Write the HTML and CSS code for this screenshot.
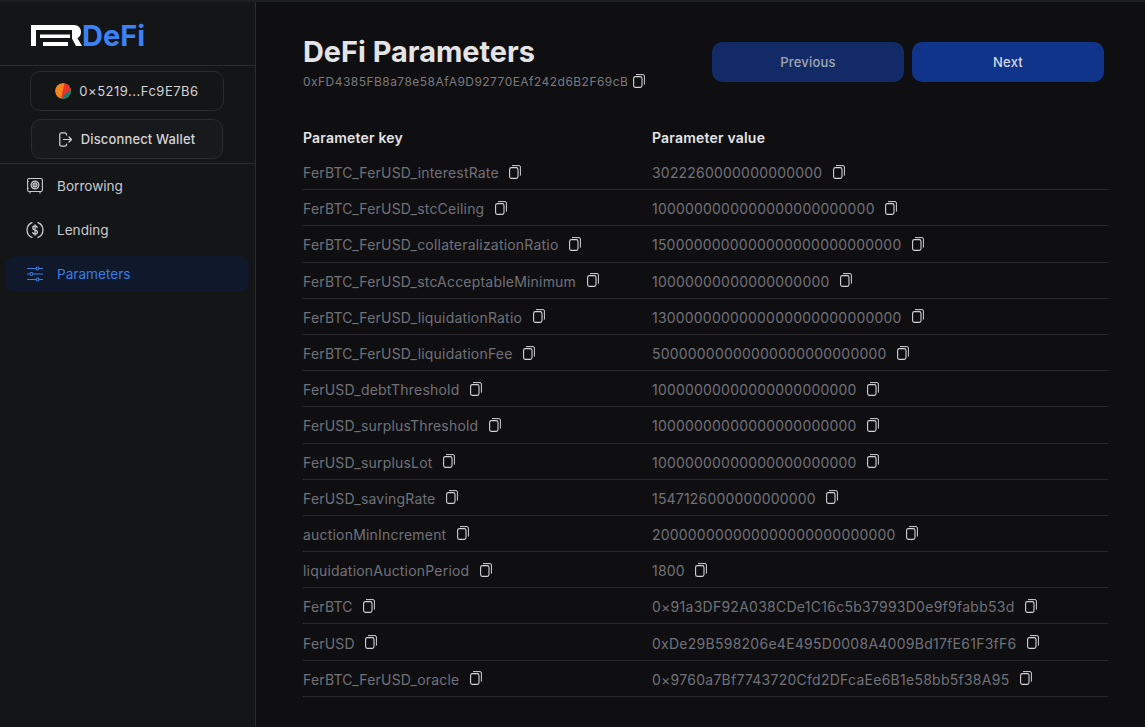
FILE: index.html
```html
<!DOCTYPE html>
<html lang="en">
<head>
<meta charset="utf-8">
<title>DeFi Parameters</title>
<link rel="stylesheet" href="styles.css">
</head>
<body>
<svg class="defs" width="0" height="0" aria-hidden="true">
  <symbol id="copy" viewBox="0 0 12 14">
    <rect x="0.6" y="2.6" width="8.4" height="10.8" rx="1.8" fill="none" stroke="currentColor" stroke-width="1.1"/>
    <path d="M3 .6h7a1.4 1.4 0 0 1 1.4 1.4v8.6" fill="none" stroke="currentColor" stroke-width="1"/>
  </symbol>
</svg>
<div class="app">
  <aside class="sidebar">
    <div class="brand">
      <svg class="fer" width="51" height="21" viewBox="0 0 51 21" aria-hidden="true">
        <path fill="#fff" d="M0 0H43c4.500 0 7 3 7 7 0 2.800-1.300 5-3.500 6.200L51 21h-6l-4-7.500V5H5v16H0z"/>
        <path fill="#fff" d="M9 9.500h30v3.500H9zM12 17h25v4H12z"/>
      </svg>
      <span class="brand-text">DeFi</span>
    </div>
    <div class="wallet">
      <button class="pill pill-account" type="button">
        <svg class="avatar" width="16" height="16" viewBox="0 0 16 16" aria-hidden="true">
          <circle cx="8" cy="8" r="8" fill="#f5841f"/>
          <path d="M9.500 .2A8 8 0 0 1 16 8L6 15.800z" fill="#e3352b"/>
          <path d="M16 7a8 8 0 0 1-9 8.900L9 12z" fill="#0f7f78"/>
        </svg>
        <span>0×5219...Fc9E7B6</span>
      </button>
      <button class="pill pill-disconnect" type="button">
        <svg width="13" height="15" viewBox="0 0 13 15" fill="none" stroke="currentColor" stroke-width="1.200" stroke-linecap="round" stroke-linejoin="round" aria-hidden="true">
          <path d="M7.500 3V2.500A1.600 1.600 0 0 0 5.900.8H2.400A1.600 1.600 0 0 0 .8 2.500v10a1.600 1.600 0 0 0 1.600 1.700h3.500a1.600 1.600 0 0 0 1.600-1.700V12"/>
          <path d="M4.500 7.500h8M10 5l2.500 2.500L10 10"/>
        </svg>
        <span>Disconnect Wallet</span>
      </button>
    </div>
    <nav class="nav">
      <a class="nav-item">
        <svg width="18" height="18" viewBox="0 0 18 18" fill="none" stroke="currentColor" stroke-width="1.100" aria-hidden="true">
          <rect x="1.600" y="1.500" width="14.800" height="13" rx="1.500"/>
          <circle cx="9" cy="8" r="3.900"/><circle cx="9" cy="8" r="1.300"/>
          <path d="M9 4.100v2.600M9 9.300v2.600M5.100 8h2.600M10.300 8h2.600M6.200 5.200l1.900 1.900M9.900 8.900l1.900 1.900M11.800 5.200 9.900 7.100M8.100 8.900l-1.900 1.900M1 4.500h1.600M1 11.500h1.600M4 14.500V16.500M14 14.500V16.500"/>
        </svg>
        <span>Borrowing</span>
      </a>
      <a class="nav-item">
        <svg width="18" height="18" viewBox="0 0 18 18" fill="none" stroke="currentColor" stroke-width="1.300" stroke-linecap="round" aria-hidden="true">
          <path d="M6 1.600a8 8 0 0 0 0 14.800M12 1.600a8 8 0 0 1 0 14.800"/>
          <path d="M11.200 6.500C11 5.500 10 5 9 5s-2.300.6-2.300 2S8 8.800 9 9s2.400.7 2.400 2S10 13 9 13s-2-.5-2.300-1.500M9 3.800V14.200"/>
        </svg>
        <span>Lending</span>
      </a>
      <a class="nav-item is-active">
        <svg width="18" height="18" viewBox="0 0 18 18" fill="none" stroke="currentColor" stroke-width="1.100" stroke-linecap="round" aria-hidden="true">
          <path d="M1.500 3.500h8.500M13 3.500h3.500M1.500 9H4M7 9h9.500M1.500 14.500h8.500M13 14.500h3.500"/>
          <circle cx="11.500" cy="3.500" r="1.500"/><circle cx="5.500" cy="9" r="1.500"/><circle cx="11.500" cy="14.500" r="1.500"/>
        </svg>
        <span>Parameters</span>
      </a>
    </nav>
  </aside>
  <main class="main">
    <header class="page-head">
      <div>
        <h1>DeFi Parameters</h1>
        <div class="address"><span>0xFD4385FB8a78e58AfA9D92770EAf242d6B2F69cB</span><svg class="copy"><use href="#copy"/></svg></div>
      </div>
      <div class="pager">
        <button class="btn btn-prev" type="button">Previous</button>
        <button class="btn btn-next" type="button">Next</button>
      </div>
    </header>
    <section class="params">
      <div class="row row-head"><div>Parameter key</div><div>Parameter value</div></div>
      <div class="row"><div class="cell"><span>FerBTC_FerUSD_interestRate</span><svg class="copy"><use href="#copy"/></svg></div><div class="cell"><span>3022260000000000000</span><svg class="copy"><use href="#copy"/></svg></div></div>
      <div class="row"><div class="cell"><span>FerBTC_FerUSD_stcCeiling</span><svg class="copy"><use href="#copy"/></svg></div><div class="cell"><span>1000000000000000000000000</span><svg class="copy"><use href="#copy"/></svg></div></div>
      <div class="row"><div class="cell"><span>FerBTC_FerUSD_collateralizationRatio</span><svg class="copy"><use href="#copy"/></svg></div><div class="cell"><span>1500000000000000000000000000</span><svg class="copy"><use href="#copy"/></svg></div></div>
      <div class="row"><div class="cell"><span>FerBTC_FerUSD_stcAcceptableMinimum</span><svg class="copy"><use href="#copy"/></svg></div><div class="cell"><span>10000000000000000000</span><svg class="copy"><use href="#copy"/></svg></div></div>
      <div class="row"><div class="cell"><span>FerBTC_FerUSD_liquidationRatio</span><svg class="copy"><use href="#copy"/></svg></div><div class="cell"><span>1300000000000000000000000000</span><svg class="copy"><use href="#copy"/></svg></div></div>
      <div class="row"><div class="cell"><span>FerBTC_FerUSD_liquidationFee</span><svg class="copy"><use href="#copy"/></svg></div><div class="cell"><span>50000000000000000000000000</span><svg class="copy"><use href="#copy"/></svg></div></div>
      <div class="row"><div class="cell"><span>FerUSD_debtThreshold</span><svg class="copy"><use href="#copy"/></svg></div><div class="cell"><span>10000000000000000000000</span><svg class="copy"><use href="#copy"/></svg></div></div>
      <div class="row"><div class="cell"><span>FerUSD_surplusThreshold</span><svg class="copy"><use href="#copy"/></svg></div><div class="cell"><span>10000000000000000000000</span><svg class="copy"><use href="#copy"/></svg></div></div>
      <div class="row"><div class="cell"><span>FerUSD_surplusLot</span><svg class="copy"><use href="#copy"/></svg></div><div class="cell"><span>10000000000000000000000</span><svg class="copy"><use href="#copy"/></svg></div></div>
      <div class="row"><div class="cell"><span>FerUSD_savingRate</span><svg class="copy"><use href="#copy"/></svg></div><div class="cell"><span>1547126000000000000</span><svg class="copy"><use href="#copy"/></svg></div></div>
      <div class="row"><div class="cell"><span>auctionMinIncrement</span><svg class="copy"><use href="#copy"/></svg></div><div class="cell"><span>200000000000000000000000000</span><svg class="copy"><use href="#copy"/></svg></div></div>
      <div class="row"><div class="cell"><span>liquidationAuctionPeriod</span><svg class="copy"><use href="#copy"/></svg></div><div class="cell"><span>1800</span><svg class="copy"><use href="#copy"/></svg></div></div>
      <div class="row"><div class="cell"><span>FerBTC</span><svg class="copy"><use href="#copy"/></svg></div><div class="cell hex"><span>0×91a3DF92A038CDe1C16c5b37993D0e9f9fabb53d</span><svg class="copy"><use href="#copy"/></svg></div></div>
      <div class="row"><div class="cell"><span>FerUSD</span><svg class="copy"><use href="#copy"/></svg></div><div class="cell hex"><span>0xDe29B598206e4E495D0008A4009Bd17fE61F3fF6</span><svg class="copy"><use href="#copy"/></svg></div></div>
      <div class="row"><div class="cell"><span>FerBTC_FerUSD_oracle</span><svg class="copy"><use href="#copy"/></svg></div><div class="cell hex"><span>0×9760a7Bf7743720Cfd2DFcaEe6B1e58bb5f38A95</span><svg class="copy"><use href="#copy"/></svg></div></div>
    </section>
  </main>
</div>
</body>
</html>
```
FILE: styles.css
```css
* { box-sizing: border-box; }
html, body { margin: 0; height: 100%; }
body {
  background: #0f0f11;
  color: #e4e4e7;
  font-family: Inter, "Liberation Sans", sans-serif;
  font-size: 14px;
  overflow: hidden;
}
.defs { position: absolute; }
.app {
  display: flex;
  height: 727px;
  border-top: 2px solid #1e1f24;
}
.sidebar {
  width: 256px;
  flex: none;
  background: #141517;
  border-right: 1px solid #2b2c30;
}
.brand {
  height: 64px;
  padding: 23px 0 0 31px;
  display: flex;
  align-items: flex-start;
  border-bottom: 1px solid #2b2c30;
}
.fer { flex: none; }
.brand-text {
  color: #3b82f6;
  font-size: 29px;
  line-height: 22px;
  font-weight: 700;
}
.wallet {
  height: 98px;
  border-bottom: 1px solid #2b2c30;
  display: flex;
  flex-direction: column;
  align-items: center;
  padding: 5px 1px 0 0;
  gap: 8px;
}
.pill {
  height: 40px;
  display: flex;
  align-items: center;
  justify-content: center;
  border-radius: 10px;
  border: 1px solid #2b2c30;
  font: inherit;
  font-weight: 400;
  font-size: 13px;
  color: #d4d4d8;
}
.pill-account { width: 194px; background: #141517; gap: 8px; letter-spacing: .5px; }
.pill-disconnect { width: 192px; background: #18191c; gap: 9px; letter-spacing: .15px; font-weight: 500; }
.avatar { border-radius: 50%; }
.nav { padding: 4px 6px 0 5px; display: flex; flex-direction: column; }
.nav-item {
  height: 36px;
  margin-bottom: 8px;
  display: flex;
  align-items: center;
  gap: 13px;
  padding-left: 21px;
  border-radius: 10px;
  color: #c9c9ce;
  font-weight: 400;
  font-size: 13.600px;
}
.nav-item svg { flex: none; }
.nav-item.is-active { background: #10192b; color: #3b7de0; }
.main { flex: 1; padding: 0 37px 0 47px; min-width: 0; }
.page-head {
  display: flex;
  justify-content: space-between;
  padding-top: 34px;
  height: 117px;
}
h1 {
  margin: 0;
  font-size: 28.900px;
  line-height: 32px;
  font-weight: 700;
  color: #e4e4e7;
}
.address {
  display: flex;
  align-items: center;
  gap: 5px;
  margin-top: 6px;
  font-size: 12px;
  line-height: 16px;
  color: #7a7a80;
  letter-spacing: .46px;
}
.pager { display: flex; gap: 8px; margin: 6px 4px 0 0; }
.btn {
  width: 192px;
  height: 40px;
  border: 0;
  border-radius: 10px;
  font: inherit;
  font-weight: 500;
  font-size: 13px;
  letter-spacing: .2px;
}
.btn-prev { background: #122b66; color: #a1a6b4; }
.btn-next { background: #10348a; color: #d4d8e2; }
.row {
  display: grid;
  grid-template-columns: 349px 1fr;
  height: 36.200px;
  padding-top: 2px;
  align-items: center;
  border-bottom: 1px solid #29292d;
  color: #71717a;
  letter-spacing: .2px;
}
.row-head {
  height: 35px;
  border-bottom: 0;
  color: #e4e4e7;
  font-weight: 600;
  letter-spacing: .2px;
}
.cell { display: flex; align-items: center; gap: 10.500px; }
.hex { letter-spacing: .26px; }
.copy { width: 12px; height: 14px; color: #d4d4d8; flex: none; margin-top: -2px; }
```
